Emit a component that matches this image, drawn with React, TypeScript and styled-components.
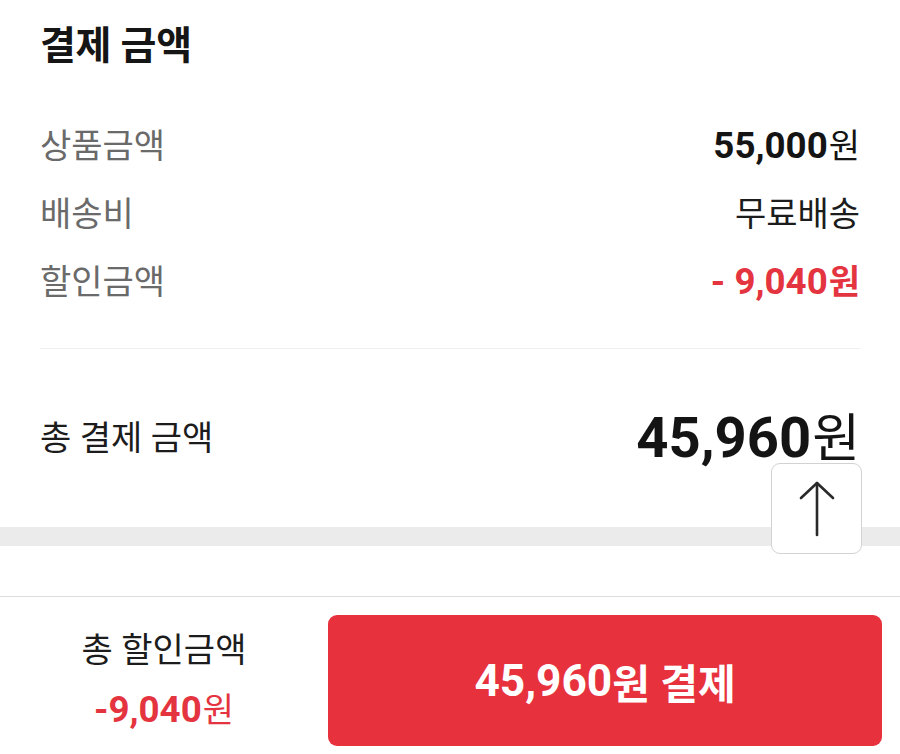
import React from 'react';
import styled, { createGlobalStyle } from 'styled-components';

const GlobalStyle = createGlobalStyle`
    html, body {
        margin: 0;
        padding: 0;
        background: #ffffff;
    }
    body {
        font-family: Roboto, "Noto Sans CJK KR", "Noto Sans", sans-serif;
        color: #111111;
    }
`;

const RED = '#e4343f';

const Page = styled.div`
    width: 900px;
    height: 754px;
    display: flex;
    flex-direction: column;
    overflow: hidden;
    position: relative;
    background: #ffffff;
`;

const Summary = styled.section`
    padding: 0 40px;
    display: flex;
    flex-direction: column;
`;

const Title = styled.h2`
    margin: 0;
    padding-top: 20px;
    font-size: 39px;
    line-height: 52px;
    font-weight: 700;
    letter-spacing: -0.3px;
    color: #151515;
`;

const RowList = styled.div`
    margin-top: 40px;
    display: flex;
    flex-direction: column;
`;

const Row = styled.div`
    height: 68px;
    display: flex;
    align-items: center;
    justify-content: space-between;
`;

const Label = styled.span<{ $dark?: boolean }>`
    font-size: 34px;
    line-height: 42px;
    color: ${p => (p.$dark ? '#1c1c1c' : '#6a6a6a')};
`;

const PlainValue = styled.span`
    font-size: 34px;
    line-height: 42px;
    color: #1c1c1c;
`;

const Price = styled.span<{ $size: number; $color?: string }>`
    font-size: ${p => p.$size}px;
    line-height: 1.25;
    color: ${p => p.$color || '#141414'};
    white-space: nowrap;
`;

const Num = styled.span`
    font-size: 1.08em;
    font-weight: 700;
`;

const Unit = styled.span<{ $bold?: boolean }>`
    font-weight: ${p => (p.$bold ? 700 : 400)};
    margin-left: 1px;
`;

const Divider = styled.hr`
    margin: 32px 0 0;
    border: 0;
    border-top: 1px solid #efefef;
`;

const TotalRow = styled.div`
    height: 178px;
    display: flex;
    align-items: center;
    justify-content: space-between;
`;

const Band = styled.div`
    height: 19px;
    background: #ebebeb;
`;

const Spacer = styled.div`
    flex: 1;
`;

const BottomBar = styled.footer`
    border-top: 1px solid #dcdcdc;
    height: 158px;
    box-sizing: border-box;
    padding: 18px 18px 8px 0;
    display: grid;
    grid-template-columns: 328px 1fr;
`;

const DiscountBox = styled.div`
    display: flex;
    flex-direction: column;
    align-items: center;
    justify-content: center;
    gap: 16px;
`;

const PayButton = styled.button`
    border: 0;
    border-radius: 9px;
    background: #e7323e;
    color: #ffffff;
    font-family: inherit;
    font-size: 41px;
    font-weight: 700;
    display: flex;
    align-items: center;
    justify-content: center;
    cursor: pointer;
`;

const TopButton = styled.button`
    position: absolute;
    right: 38px;
    top: 463px;
    width: 91px;
    height: 91px;
    box-sizing: border-box;
    border: 1px solid #d2d2d2;
    border-radius: 9px;
    background: #ffffff;
    display: flex;
    align-items: center;
    justify-content: center;
    padding: 0;
`;

const ArrowUp = () => (
    <svg width="36" height="58" viewBox="0 0 36 58" fill="none" stroke="#2a2a2a" strokeWidth="2.6" strokeLinecap="round" strokeLinejoin="round">
        <path d="M18 3 V55" />
        <path d="M2 18 L18 3 L34 18" />
    </svg>
);

const rows = [
    { label: '상품금액', num: '55,000', color: undefined },
    { label: '배송비', text: '무료배송' },
    { label: '할인금액', num: '- 9,040', color: RED },
];

const App = () => {
    return (
        <Page>
            <GlobalStyle />
            <Summary>
                <Title>결제 금액</Title>
                <RowList>
                    {rows.map(r => (
                        <Row key={r.label}>
                            <Label>{r.label}</Label>
                            {r.num ? (
                                <Price $size={34} $color={r.color}>
                                    <Num>{r.num}</Num>
                                    <Unit $bold={!!r.color}>원</Unit>
                                </Price>
                            ) : (
                                <PlainValue>{r.text}</PlainValue>
                            )}
                        </Row>
                    ))}
                </RowList>
                <Divider />
                <TotalRow>
                    <Label $dark>총 결제 금액</Label>
                    <Price $size={52}>
                        <Num>45,960</Num>
                        <Unit>원</Unit>
                    </Price>
                </TotalRow>
            </Summary>
            <Band />
            <Spacer />
            <BottomBar>
                <DiscountBox>
                    <Label $dark>총 할인금액</Label>
                    <Price $size={34} $color={RED}>
                        <Num>-9,040</Num>
                        <Unit>원</Unit>
                    </Price>
                </DiscountBox>
                <PayButton>
                    <Num>45,960</Num>원 결제
                </PayButton>
            </BottomBar>
            <TopButton aria-label="맨 위로">
                <ArrowUp />
            </TopButton>
        </Page>
    );
};

export default App;
